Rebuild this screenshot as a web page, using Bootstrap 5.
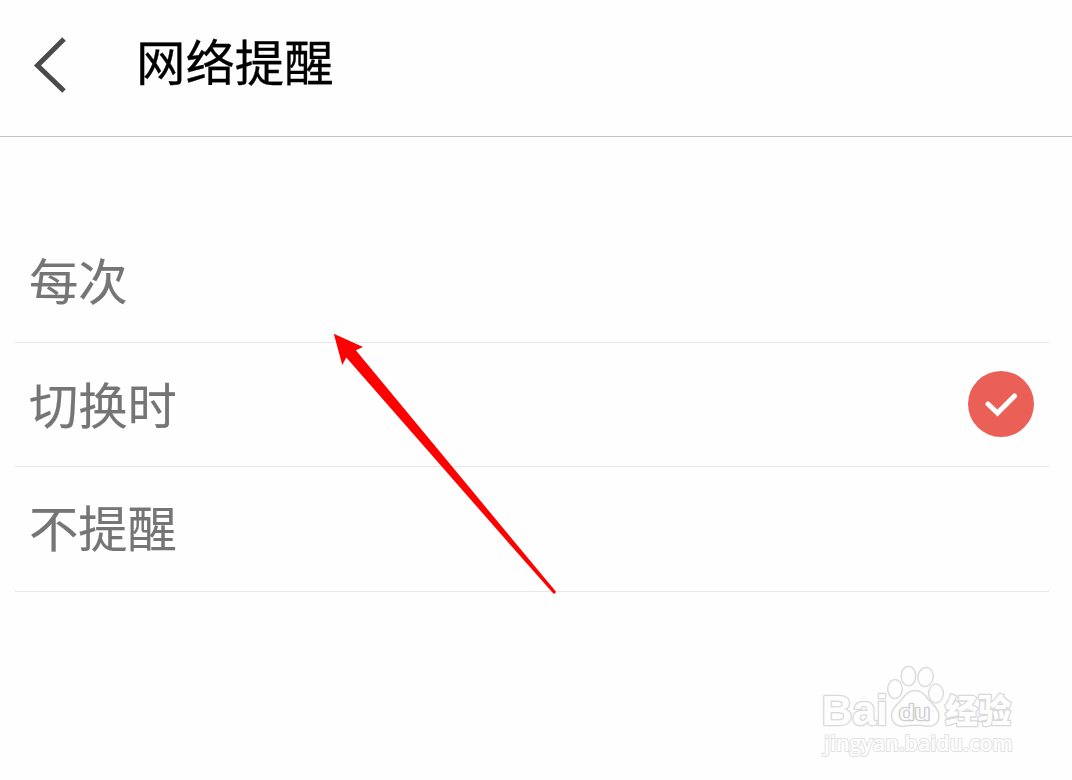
<!DOCTYPE html>
<html lang="zh-CN">
<head>
  <meta charset="UTF-8">
  <meta name="viewport" content="width=device-width, initial-scale=1.0">
  <title>网络提醒</title>
  <link href="https://cdn.jsdelivr.net/npm/bootstrap@5.3.3/dist/css/bootstrap.min.css" rel="stylesheet">
  <style>
    body {
      font-family: "Noto Sans CJK SC", sans-serif;
      background-color: #fefefe;
      height: 780px;
      overflow: hidden;
    }

    .top-bar {
      height: 137px;
      padding: 0 33px 16px;
      border-bottom: 1px solid #c3c3c3;
    }

    .back-link {
      width: 34px;
      height: 56px;
      margin-top: 9px;
    }

    .page-title {
      margin-left: 69px;
      font-size: 49.4px;
      line-height: 72px;
      font-weight: 400;
      color: #000;
      -webkit-text-stroke: 0.3px #000;
    }

    .options {
      margin: 82px 23px 0 15px;
    }

    .option {
      height: 124px;
      padding: 0 15px 4px 14px;
      font-size: 49.3px;
      line-height: 72px;
      color: #757575;
      -webkit-text-stroke: 0.2px #757575;
      background: transparent;
      border: 0;
      border-bottom: 1px solid #e6e6e6 !important;
      border-radius: 0;
    }

    .option:last-child {
      height: 125px;
      padding-bottom: 6px;
    }

    .check-icon {
      margin-top: 3px;
    }

    .arrow {
      left: 325px;
      top: 325px;
    }

    .watermark {
      left: 812px;
      top: 655px;
    }
  </style>
</head>
<body class="position-relative">

<!-- Header -->
<header class="top-bar d-flex align-items-center">
  <a class="back-link d-block" href="#" aria-label="返回">
    <svg class="d-block" width="34" height="56" viewBox="0 0 34 56">
      <path d="M31 2 L4.5 28.5 L31 54" fill="none" stroke="#4a4a4a" stroke-width="5"/>
    </svg>
  </a>
  <h1 class="page-title mb-0">网络提醒</h1>
</header>

<!-- Options -->
<ul class="options list-group list-group-flush">
  <li class="option list-group-item d-flex align-items-center justify-content-between">每次</li>
  <li class="option list-group-item d-flex align-items-center justify-content-between">
    切换时
    <svg class="check-icon" width="66" height="66" viewBox="0 0 66 66">
      <circle cx="33" cy="33" r="33" fill="#ea5f56"/>
      <path d="M20 33 L29.5 42 L46.5 25" fill="none" stroke="#fff" stroke-width="5" stroke-linecap="round"/>
    </svg>
  </li>
  <li class="option list-group-item d-flex align-items-center justify-content-between">不提醒</li>
</ul>

<!-- Pointer arrow -->
<svg class="arrow position-absolute" width="240" height="275" viewBox="325 325 240 275">
  <path d="M333.8 333.8 L363 347 L355.8 350.2 L512.5 539.5 L555.4 591 A1.6 1.6 0 0 1 552.9 593 L507 541 L346.3 357.6 L342.3 365 Z" fill="#f00"/>
</svg>

<!-- Watermark -->
<svg class="watermark position-absolute" width="210" height="110" viewBox="812 655 210 110">
  <g fill="#fefefe" stroke="#dcdcdc" stroke-width="1.5">
    <ellipse cx="895" cy="689" rx="7.3" ry="9.6"/>
    <ellipse cx="908.5" cy="676" rx="7.3" ry="9.8"/>
    <ellipse cx="925.5" cy="677" rx="7.6" ry="9.6" transform="rotate(10 925.5 677)"/>
    <ellipse cx="936" cy="693.5" rx="7.4" ry="9.4"/>
    <path d="M915 690.5 C921 690.5 925 694.5 928 699 C932 704 939 708 939 716 C939 723 934 726.8 927 726.3 C920 725 911 725 904 726.3 C897 727 891.5 723 891.5 715 C891.5 708 898 704 902 699 C905 694.5 909 690.5 915 690.5 Z"/>
  </g>
  <g fill="#fefefe" stroke="#d9d9d9" stroke-width="2.6" paint-order="stroke" stroke-linejoin="round">
    <text x="821.5" y="725" font-family="Liberation Sans, sans-serif" font-weight="700" font-size="43" textLength="66.5" lengthAdjust="spacingAndGlyphs">Bai</text>
    <text x="899" y="720" font-family="Liberation Sans, sans-serif" font-size="22" stroke="#cfcfcf" textLength="31" lengthAdjust="spacingAndGlyphs">du</text>
    <text x="945" y="723" font-family="Noto Sans CJK SC, sans-serif" font-weight="900" font-size="33" textLength="66" lengthAdjust="spacingAndGlyphs">经验</text>
  </g>
  <text x="824" y="751" font-family="Open Sans, sans-serif" font-size="21" font-weight="600" fill="#fefefe" stroke="#e2e2e2" stroke-width="2" paint-order="stroke" textLength="189" lengthAdjust="spacingAndGlyphs">jingyan.baidu.com</text>
</svg>

<script src="https://cdn.jsdelivr.net/npm/bootstrap@5.3.3/dist/js/bootstrap.bundle.min.js"></script>
</body>
</html>
